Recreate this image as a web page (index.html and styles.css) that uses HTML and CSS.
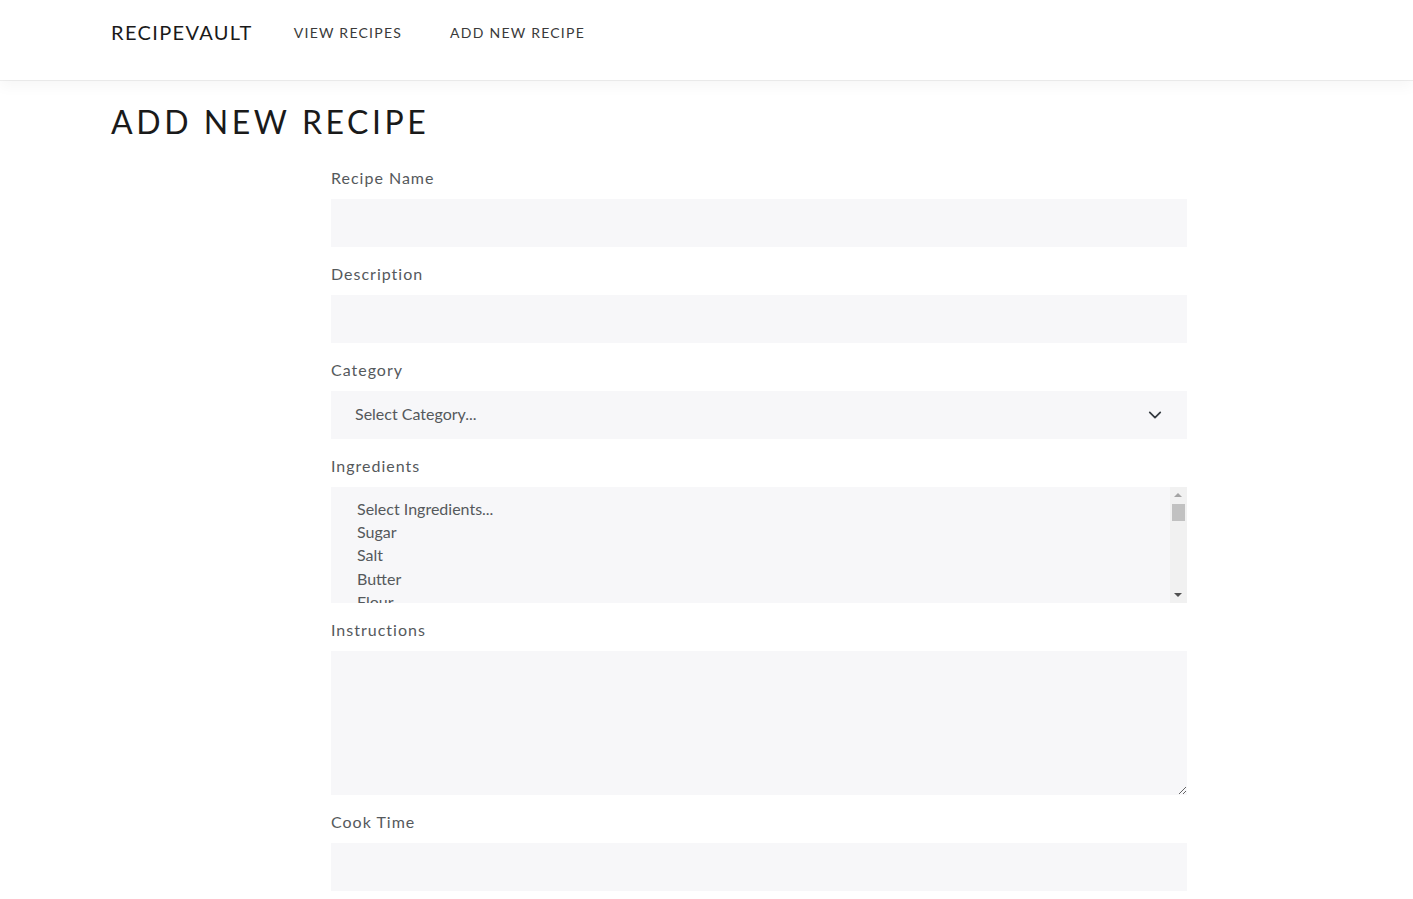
FILE: index.html
```html
<!DOCTYPE html>
<html lang="en">
<head>
<meta charset="utf-8">
<title>RecipeVault - Add New Recipe</title>
<link rel="stylesheet" href="styles.css">
</head>
<body>
<header class="navbar">
  <a class="brand" href="#">RECIPEVAULT</a>
  <nav class="nav">
    <a class="nav-link" href="#">VIEW RECIPES</a>
    <a class="nav-link" href="#">ADD NEW RECIPE</a>
  </nav>
</header>
<main class="container">
  <h1 class="page-title">ADD NEW RECIPE</h1>
  <form class="recipe-form">
    <div class="group">
      <label class="label" for="name">Recipe Name</label>
      <input class="control" id="name" type="text">
    </div>
    <div class="group">
      <label class="label" for="desc">Description</label>
      <input class="control" id="desc" type="text">
    </div>
    <div class="group">
      <label class="label" for="cat">Category</label>
      <div class="select-wrap">
        <select class="control select" id="cat">
          <option>Select Category...</option>
          <option>Breakfast</option>
          <option>Lunch</option>
          <option>Dinner</option>
          <option>Dessert</option>
        </select>
        <svg class="chevron" width="14" height="14" viewBox="0 0 16 16" aria-hidden="true"><path d="M2 5l6 6 6-6" fill="none" stroke="#343a40" stroke-width="2" stroke-linecap="round" stroke-linejoin="round"/></svg>
      </div>
    </div>
    <div class="group">
      <label class="label" for="ing">Ingredients</label>
      <div class="select-wrap">
        <select class="control multi" id="ing" multiple>
          <option>Select Ingredients...</option>
          <option>Sugar</option>
          <option>Salt</option>
          <option>Butter</option>
          <option>Flour</option>
          <option>Eggs</option>
          <option>Milk</option>
        </select>
        <div class="scrollbar" aria-hidden="true">
          <span class="arrow arrow-up"></span>
          <span class="thumb"></span>
          <span class="arrow arrow-down"></span>
        </div>
      </div>
    </div>
    <div class="group">
      <label class="label" for="instr">Instructions</label>
      <textarea class="control textarea" id="instr"></textarea>
    </div>
    <div class="group">
      <label class="label" for="time">Cook Time</label>
      <input class="control" id="time" type="text">
    </div>
  </form>
</main>
</body>
</html>
```
FILE: styles.css
```css
html, body {
  margin: 0;
  padding: 0;
  background: #fff;
}
body {
  font-family: "Lato", "Open Sans", sans-serif;
  color: #55595c;
}
a { text-decoration: none; }

.navbar {
  height: 80px;
  box-sizing: border-box;
  display: flex;
  align-items: center;
  padding: 0 111px 16px;
  background: #fff;
  box-shadow: 0 1px 0 rgba(0,0,0,0.06), 0 6px 14px rgba(0,0,0,0.04);
  position: relative;
  z-index: 1;
}
.brand {
  font-size: 20px;
  letter-spacing: 1.35px;
  color: #1a1a1a;
  margin-right: 41px;
}
.nav {
  display: flex;
  gap: 48px;
}
.nav-link {
  font-size: 14px;
  letter-spacing: 1.25px;
  color: #3a3a3a;
}

.container {
  padding: 0 111px;
}
.page-title {
  margin: 23px 0 26px;
  font-size: 32px;
  line-height: 38px;
  font-weight: 400;
  letter-spacing: 3.57px;
  color: #1a1a1a;
}
.recipe-form {
  margin-left: 220px;
  width: 856px;
}
.group {
  margin-bottom: 16px;
}
.label {
  display: block;
  font-size: 16px;
  line-height: 22px;
  letter-spacing: 1px;
  margin-bottom: 10px;
  color: #55595c;
}
.control {
  display: block;
  box-sizing: border-box;
  width: 100%;
  height: 48px;
  border: 0;
  border-radius: 0;
  background: #f7f7f9;
  padding: 0 24px;
  font-family: inherit;
  font-size: 16px;
  color: #55595c;
  outline: none;
}
.select-wrap {
  position: relative;
}
.select {
  appearance: none;
  -webkit-appearance: none;
  padding-bottom: 3px;
}
.chevron {
  position: absolute;
  right: 25px;
  top: 17px;
  pointer-events: none;
}
.multi {
  height: 116px;
  padding: 10px 24px 12px;
  overflow-y: hidden;
}
.multi option {
  padding: 2px 2px 2px;
  color: #55595c;
}
.scrollbar {
  position: absolute;
  top: 0;
  right: 0;
  bottom: 0;
  width: 17px;
  background: #f1f1f1;
  pointer-events: none;
}
.arrow {
  position: absolute;
  left: 4px;
  width: 0;
  height: 0;
  border-left: 4px solid transparent;
  border-right: 4px solid transparent;
}
.arrow-up {
  top: 6px;
  border-bottom: 4px solid #a3a3a3;
}
.arrow-down {
  bottom: 6px;
  border-top: 4px solid #505050;
}
.thumb {
  position: absolute;
  left: 2px;
  right: 2px;
  top: 17px;
  height: 17px;
  background: #c1c1c1;
}
.textarea {
  height: 144px;
  padding: 12px 24px;
  resize: vertical;
}
```
